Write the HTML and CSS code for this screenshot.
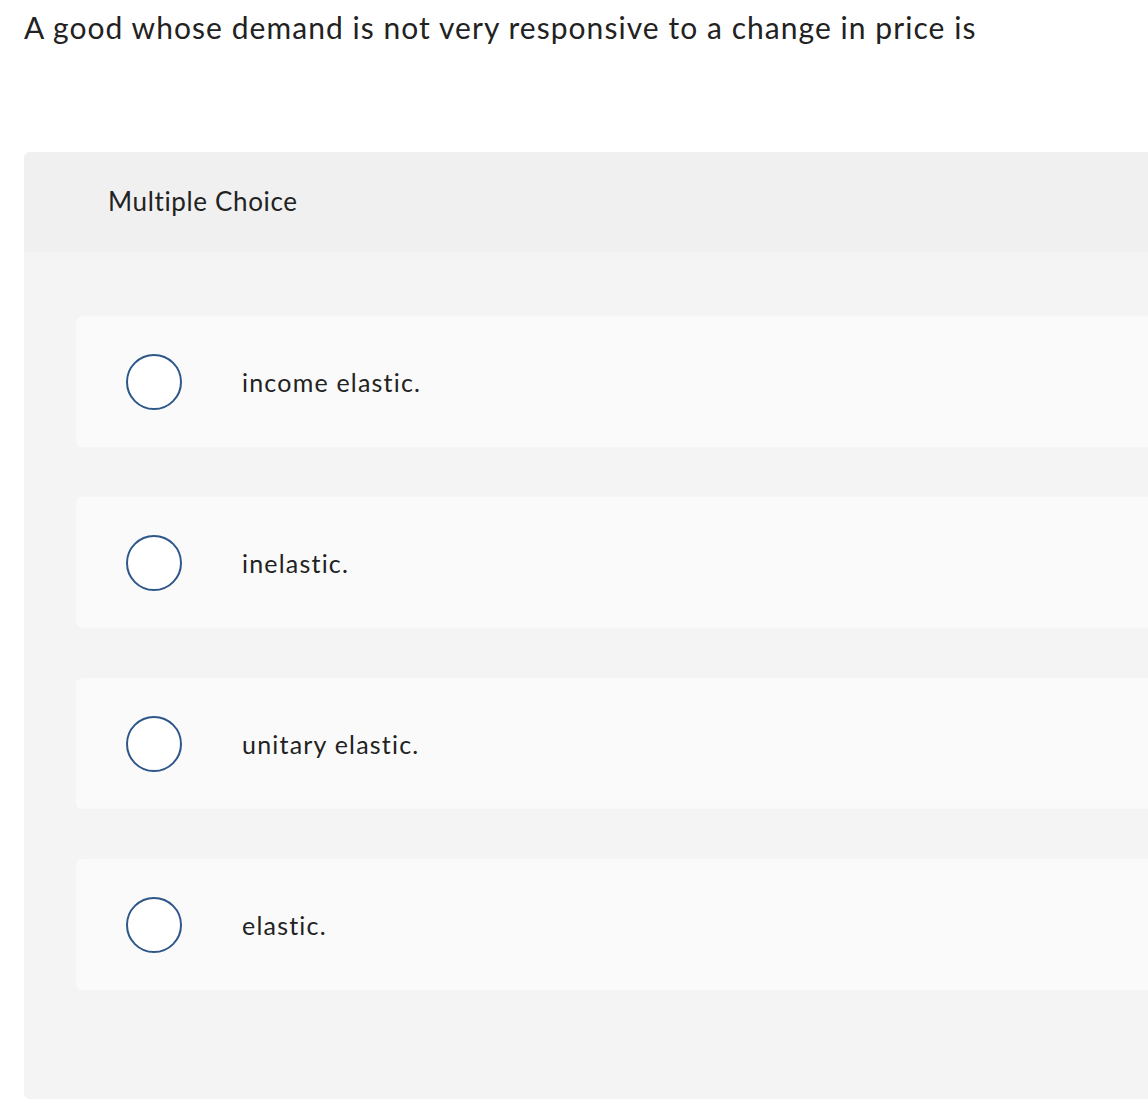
FILE: index.html
```html
<!DOCTYPE html>
<html lang="en">
<head>
    <meta charset="UTF-8">
    <meta name="viewport" content="width=device-width, initial-scale=1.0">
    <title>Question</title>
    <link rel="stylesheet" href="styles.css">
</head>
<body>
    <p class="question">A good whose demand is not very responsive to a change in price is</p>

    <div class="panel">
        <div class="panel-head">Multiple Choice</div>
        <div class="choices">
            <label class="choice">
                <span class="radio"></span>
                <span class="choice-text">income elastic.</span>
            </label>
            <label class="choice">
                <span class="radio"></span>
                <span class="choice-text">inelastic.</span>
            </label>
            <label class="choice">
                <span class="radio"></span>
                <span class="choice-text">unitary elastic.</span>
            </label>
            <label class="choice">
                <span class="radio"></span>
                <span class="choice-text">elastic.</span>
            </label>
        </div>
    </div>
</body>
</html>
```

FILE: styles.css
```css
body {
    margin: 0;
    padding: 0 0 0 24px;
    font-family: Lato, "Open Sans", sans-serif;
    font-variant-ligatures: none;
    color: #222;
    background: #fff;
    overflow: hidden;
}
.question {
    margin: 0;
    padding-top: 9px;
    height: 143px;
    font-size: 30px;
    line-height: 36px;
    letter-spacing: 1.05px;
    color: #222;
}
.panel {
    margin-right: -40px;
    background: #f4f4f4;
    border-radius: 6px;
    overflow: hidden;
}
.panel-head {
    height: 98px;
    padding: 0 0 2px 84px;
    display: flex;
    align-items: center;
    background: #f0f0f0;
    font-size: 26px;
    letter-spacing: 0.65px;
}
.choices {
    display: flex;
    flex-direction: column;
    gap: 50px;
    padding: 64px 0 109px 52px;
}
.choice {
    height: 131px;
    display: flex;
    align-items: center;
    padding-left: 50px;
    background: #fafafa;
    border-radius: 6px;
    cursor: pointer;
}
.radio {
    width: 52px;
    height: 52px;
    border: 2px solid #2d5689;
    border-radius: 50%;
    background: #fff;
    flex-shrink: 0;
}
.choice-text {
    margin-left: 60px;
    font-size: 25px;
    letter-spacing: 1.2px;
}
```
